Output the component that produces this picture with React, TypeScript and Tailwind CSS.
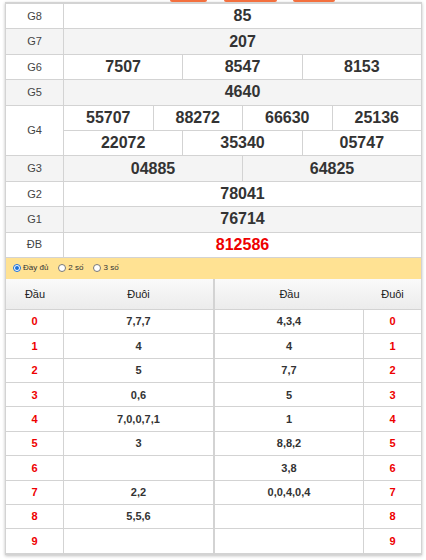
import React from 'react';

const PRIZES: { label: string; rows: string[][]; red?: boolean }[] = [
  { label: 'G8', rows: [['85']] },
  { label: 'G7', rows: [['207']] },
  { label: 'G6', rows: [['7507', '8547', '8153']] },
  { label: 'G5', rows: [['4640']] },
  { label: 'G4', rows: [['55707', '88272', '66630', '25136'], ['22072', '35340', '05747']] },
  { label: 'G3', rows: [['04885', '64825']] },
  { label: 'G2', rows: [['78041']] },
  { label: 'G1', rows: [['76714']] },
  { label: 'ĐB', rows: [['812586']], red: true },
];

// đầu -> đuôi, đuôi -> đầu
const DAU = ['7,7,7', '4', '5', '0,6', '7,0,0,7,1', '3', '', '2,2', '5,5,6', ''];
const DUOI = ['4,3,4', '4', '7,7', '5', '1', '8,8,2', '3,8', '0,0,4,0,4', '', ''];

function Radio({ checked, label }: { checked?: boolean; label: string }) {
  return (
    <label className="flex items-center gap-[2px]">
      <span
        className={
          checked
            ? 'w-[8px] h-[8px] rounded-full border border-[#1a6fd8] bg-white flex items-center justify-center'
            : 'w-[8px] h-[8px] rounded-full border border-[#777] bg-white'
        }
      >
        {checked && <span className="w-[4px] h-[4px] rounded-full bg-[#1a6fd8]" />}
      </span>
      <span className="text-[8px] text-[#333]">{label}</span>
    </label>
  );
}

function LotoTable({ headLeft, headRight, values, side }: { headLeft: string; headRight: string; values: string[]; side: 'left' | 'right' }) {
  const isLeft = side === 'left';
  return (
    <div className={isLeft ? 'w-[208px] border-r border-[#d3d3d3]' : 'flex-1 border-l border-[#d3d3d3]'}>
      <div className="h-[31px] flex items-center border-b border-[#d3d3d3] bg-gradient-to-b from-[#fafafa] to-[#ececec] text-[11px] text-[#222]">
        <div className={isLeft ? 'w-[58px] text-center' : 'w-[149px] text-center'}>{headLeft}</div>
        <div className="flex-1 text-center">{headRight}</div>
      </div>
      {values.map((v, i) => (
        <div key={i} className="h-[24.4px] flex border-b border-[#d3d3d3] text-[11px] font-bold">
          {isLeft ? (
            <>
              <div className="w-[58px] border-r border-[#d3d3d3] flex items-center justify-center text-[#e00]">{i}</div>
              <div className="flex-1 flex items-center justify-center text-[#333]">{v}</div>
            </>
          ) : (
            <>
              <div className="w-[149px] border-r border-[#d3d3d3] flex items-center justify-center text-[#333]">{v}</div>
              <div className="flex-1 flex items-center justify-center text-[#e00]">{i}</div>
            </>
          )}
        </div>
      ))}
    </div>
  );
}

export default function App() {
  return (
    <div className="w-[426px] h-[560px] bg-white overflow-hidden font-['Liberation_Sans',Arial,sans-serif]">
      {/* tab buttons scrolled off the top */}
      <div className="h-[2px] relative">
        <div className="absolute left-[170px] top-0 w-[37px] h-[2px] rounded-b bg-[#f3703f]" />
        <div className="absolute left-[224px] top-0 w-[53px] h-[2px] rounded-b bg-[#f3703f]" />
        <div className="absolute left-[293px] top-0 w-[42px] h-[2px] rounded-b bg-[#f3703f]" />
      </div>

      <div className="ml-[5px] w-[417px] border-t-2 border-x border-b border-[#d3d3d3] shadow-[0_1px_3px_rgba(0,0,0,0.25)]">
        {/* Prize table */}
        {PRIZES.map((p, pi) => (
          <div key={p.label} className={pi % 2 === 1 ? 'flex bg-[#f4f4f4]' : 'flex bg-white'}>
            <div className="w-[58px] border-r border-b border-[#d3d3d3] flex items-center justify-center text-[11px] text-[#444]">
              {p.label}
            </div>
            <div className="flex-1 flex flex-col">
              {p.rows.map((row, ri) => (
                <div key={ri} className="h-[25.4px] flex border-b border-[#d3d3d3]">
                  {row.map((n, ni) => (
                    <div
                      key={ni}
                      className={
                        ni < row.length - 1
                          ? 'flex-1 border-r border-[#d3d3d3] flex items-center justify-center text-[16px] font-bold text-[#333]'
                          : p.red
                          ? 'flex-1 flex items-center justify-center text-[16px] font-bold text-[#e00]'
                          : 'flex-1 flex items-center justify-center text-[16px] font-bold text-[#333]'
                      }
                    >
                      {n}
                    </div>
                  ))}
                </div>
              ))}
            </div>
          </div>
        ))}

        {/* Options */}
        <div className="h-[21px] bg-[#ffe293] flex items-center gap-[10px] pl-[7px]">
          <Radio checked label="Đầy đủ" />
          <Radio label="2 số" />
          <Radio label="3 số" />
        </div>

        {/* Loto */}
        <div className="flex">
          <LotoTable headLeft="Đầu" headRight="Đuôi" values={DAU} side="left" />
          <LotoTable headLeft="Đầu" headRight="Đuôi" values={DUOI} side="right" />
        </div>
      </div>
    </div>
  );
}
